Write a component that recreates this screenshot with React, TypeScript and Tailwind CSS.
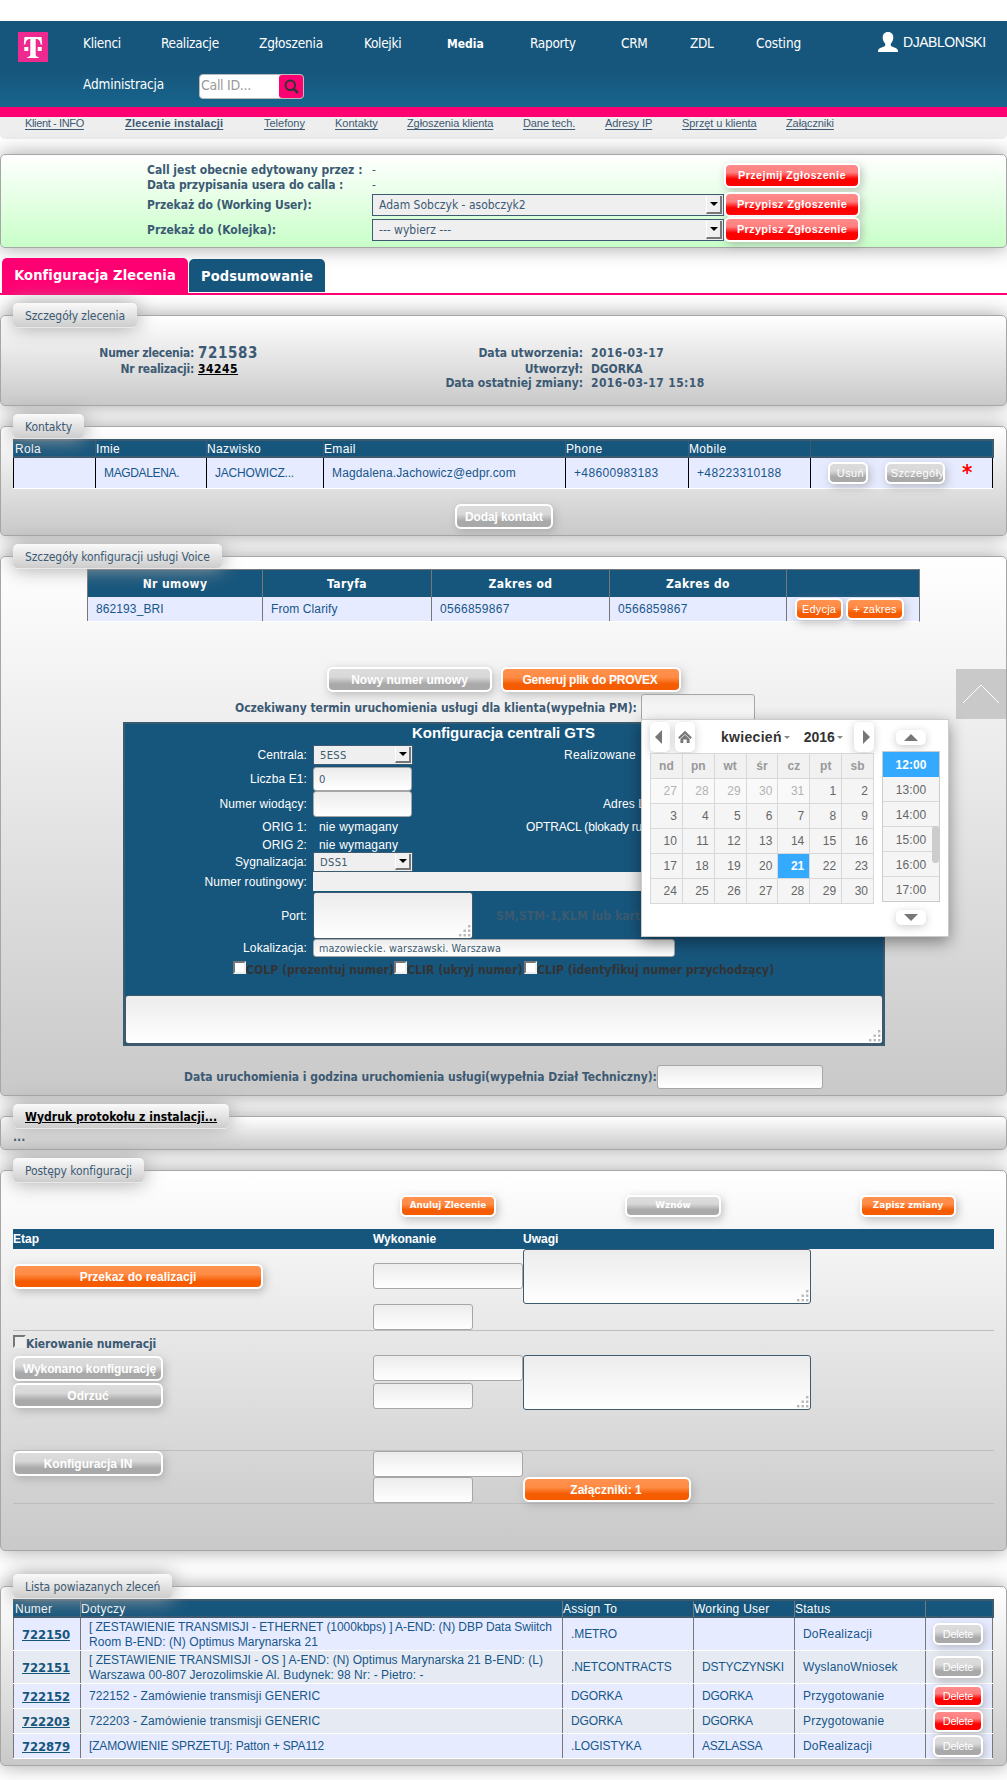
import React from "react";
import clsx from "clsx";

const ARIAL = "font-[family-name:'Liberation_Sans',Arial,sans-serif]";
const TAHOMA = "font-[family-name:'DejaVu_Sans_Condensed','DejaVu_Sans',sans-serif]";
const VERDANA = "font-[family-name:'DejaVu_Sans',sans-serif]";

const shadow = "shadow-[0_0_20px_#a3a3a3]";

type Tone = "red" | "orange" | "gray";

const tones: Record<Tone, string> = {
  red: "bg-[linear-gradient(#ff8b8b_0%,#ff8080_36%,#ff0000_66%,#ff0000_100%)]",
  orange: "bg-[linear-gradient(#ff924f_0%,#ff8b45_40%,#f55b00_72%,#f55b00_100%)]",
  gray: "bg-[linear-gradient(#dcdcdc_0%,#d8d8d8_38%,#a9a9a9_72%,#a9a9a9_100%)]",
};

function Btn({ tone, className, children }: { tone: Tone; className: string; children: React.ReactNode }) {
  return (
    <button
      className={clsx(
        "flex shrink-0 items-center justify-center overflow-hidden rounded-[6px] border-2 border-white text-white shadow-[2px_3px_9px_#9a9a9a99]",
        tones[tone],
        className,
      )}
    >
      {children}
    </button>
  );
}

function Panel({ title, strong, className, children }: { title: string; strong?: boolean; className: string; children?: React.ReactNode }) {
  return (
    <section className={clsx("relative rounded-[5px] border border-[#a6a6a6] bg-linear-to-b from-white to-[#c9c9c9] px-3", shadow, className)}>
      <h2
        className={clsx(
          "absolute -top-[13px] left-3 flex h-[25px] items-center rounded-[5px] border-b border-[#e8e8e8] bg-linear-to-b from-[#fafafa] to-[#cdcdcd] px-3 pt-[2px] text-[12px]",
          shadow,
          strong ? "font-bold tracking-[0.04px] text-black underline" : "font-normal tracking-[-0.08px]",
        )}
      >
        {title}
      </h2>
      {children}
    </section>
  );
}

function Arrow() {
  return (
    <span className="my-px mr-px flex w-4 items-center justify-center self-stretch border-r-2 border-b-2 border-l border-[#777] border-l-white bg-[#f0f0f0]">
      <span className="border-x-4 border-t-4 border-x-transparent border-t-black" />
    </span>
  );
}

function Select({ className, children }: { className: string; children: React.ReactNode }) {
  return (
    <div className={clsx("flex shrink-0 items-center justify-between bg-[#efefef]", className)}>
      <span>{children}</span>
      <Arrow />
    </div>
  );
}

function Field({ className, children }: { className: string; children?: React.ReactNode }) {
  return <div className={clsx("shrink-0 rounded-[3px] border border-[#a6a6a6] bg-linear-to-b from-[#ececec] to-white", className)}>{children}</div>;
}

function Area({ className }: { className: string }) {
  return (
    <div className={clsx("relative shrink-0 rounded-[3px] border border-[#3c5a70] bg-linear-to-b from-[#ececec] to-white", className)}>
      <svg className="absolute right-px bottom-px size-3" viewBox="0 0 12 12" fill="#b8b8b8">
        <rect x="9" y="0" width="2.4" height="2.4" />
        <rect x="4.5" y="4.5" width="2.4" height="2.4" />
        <rect x="9" y="4.5" width="2.4" height="2.4" />
        <rect x="0" y="9" width="2.4" height="2.4" />
        <rect x="4.5" y="9" width="2.4" height="2.4" />
        <rect x="9" y="9" width="2.4" height="2.4" />
      </svg>
    </div>
  );
}

function Check({ className }: { className?: string }) {
  return <span className={clsx("size-[13px] shrink-0 border-2 border-t-[#777] border-r-[#eee] border-b-[#eee] border-l-[#777]", className ?? "bg-white")} />;
}

function Row({ label, className, children }: { label: string; className: string; children?: React.ReactNode }) {
  return (
    <div className={clsx("flex items-center", className)}>
      <span className="mr-[6px] w-[182px] shrink-0 text-right">{label}</span>
      {children}
    </div>
  );
}

function Header() {
  const nav: [string, string][] = [
    ["Klienci", "w-[78px]"],
    ["Realizacje", "w-[98px]"],
    ["Zgłoszenia", "w-[105px] tracking-[-0.15px]"],
    ["Kolejki", "w-[83px]"],
    ["Media", "w-[83px]"],
    ["Raporty", "w-[91px]"],
    ["CRM", "w-[69px]"],
    ["ZDL", "w-[66px]"],
    ["Costing", "w-[122px] tracking-[-0.1px]"],
  ];
  return (
    <header className="mt-[21px] h-24 border-b-10 border-[#ff0073] bg-[linear-gradient(#17567c_0%,#17567c_58%,#17658d_100%)] text-[13.5px] tracking-[-0.3px] text-white">
      <div className="flex">
        <div className="mt-[11px] ml-[18px] flex size-[30px] items-center justify-center bg-[#ee2a90]">
          <svg className="size-[30px]" viewBox="0 0 30 30" fill="white">
            <path d="M6.500 5h17l.7 7.500h-1.500c-.7-4-1.800-5.400-5-5.500v15.300c0 2 .6 2.400 3 2.600V26h-11.400v-1.100c2.400-.2 3-.6 3-2.600V7c-3.200.1-4.300 1.500-5 5.500H5.800z" />
            <path d="M6.300 15h4v4h-4zM19.700 15h4v4h-4z" />
          </svg>
        </div>
        <div className="ml-[35px] flex flex-col">
          <nav className="mt-[11px] flex h-[23px] items-center">
            {nav.map(([t, w]) => (
              <a key={t} className={clsx("shrink-0", w, t === "Media" && "text-[12px] font-bold tracking-normal")}>
                {t}
              </a>
            ))}
            <svg className="-mt-[3px] h-5 w-5 shrink-0" viewBox="0 0 20 20" fill="white">
              <path d="M10 0c3.500 0 5.300 2.300 5.300 5.500 0 2.700-1.200 4.800-2.500 5.900v2.400c0 .9 7.200 2 7.200 5V20H0v-1.200c0-3 7.200-4.100 7.200-5v-2.400C5.900 10.300 4.700 8.200 4.700 5.500 4.700 2.300 6.500 0 10 0z" />
            </svg>
            <span className={clsx("-mt-[2px] ml-[5px] text-[14px] tracking-[-0.45px]", ARIAL)}>DJABLONSKI</span>
          </nav>
          <div className="mt-[18px] flex">
            <span className="mt-px w-[116px] leading-[20px] tracking-[-0.15px]">Administracja</span>
            <div className="mt-px flex h-[25px] w-[105px] rounded-[4px] border border-[#bbb] bg-white">
              <span className="flex-1 pl-px text-[14px] leading-[20px] tracking-[-0.3px] text-[#999]">Call ID...</span>
              <span className="flex w-6 items-center justify-center rounded-[3px] bg-[#ff0073]">
                <svg className="size-[15px]" viewBox="0 0 15 15" fill="none" stroke="#333" strokeWidth="2">
                  <circle cx="6.300" cy="6.300" r="4.800" />
                  <path d="M9.800 9.800l4.200 4.200" strokeWidth="2.600" />
                </svg>
              </span>
            </div>
          </div>
        </div>
      </div>
    </header>
  );
}

function SubMenu() {
  const items: [string, string][] = [
    ["Klient - INFO", "w-[100px] tracking-[-0.36px]"],
    ["Zlecenie instalacji", "w-[139px] font-bold tracking-[0.22px]"],
    ["Telefony", "w-[71px]"],
    ["Kontakty", "w-[72px]"],
    ["Zgłoszenia klienta", "w-[116px] tracking-[-0.1px]"],
    ["Dane tech.", "w-[82px] tracking-[-0.1px]"],
    ["Adresy IP", "w-[77px] tracking-[-0.05px]"],
    ["Sprzęt u klienta", "w-[104px] tracking-[-0.08px]"],
    ["Załączniki", "w-[60px] tracking-[-0.1px]"],
  ];
  return (
    <nav className={clsx("flex h-[22px] rounded-b-[5px] bg-[#eee] pl-[25px] text-[11px] leading-[12px]", ARIAL)}>
      {items.map(([t, c]) => (
        <a key={t} className={clsx("shrink-0 underline underline-offset-[2px]", c)}>
          {t}
        </a>
      ))}
    </nav>
  );
}

function AssignPanel() {
  const b = clsx("-ml-px h-[25px] w-[136px] text-[11px] font-bold tracking-[0.3px]", ARIAL);
  const s = "h-[22px] w-[352px] border border-[#3c5a70] pl-[6px] text-[12px]";
  return (
    <section
      className={clsx(
        "mt-[15px] grid h-[94px] grid-cols-[225px_353px_136px] grid-rows-[15px_15px_25px_25px] content-start items-center rounded-[5px] border border-[#a6a6a6] bg-linear-to-b from-white to-[#c8ffc8] pt-[7px] pl-[146px] text-[12px] font-bold",
        shadow,
      )}
    >
      <span>Call jest obecnie edytowany przez :</span>
      <span className="font-normal">-</span>
      <div className="row-span-2 -mt-[3px]">
        <Btn tone="red" className={b}>Przejmij Zgłoszenie</Btn>
      </div>
      <span className="tracking-[-0.1px]">Data przypisania usera do calla :</span>
      <span className="font-normal">-</span>
      <span className="tracking-[-0.07px]">Przekaż do (Working User):</span>
      <Select className={clsx(s, "font-normal")}>Adam Sobczyk - asobczyk2</Select>
      <Btn tone="red" className={b}>Przypisz Zgłoszenie</Btn>
      <span>Przekaż do (Kolejka):</span>
      <Select className={clsx(s, "font-normal")}>--- wybierz ---</Select>
      <Btn tone="red" className={b}>Przypisz Zgłoszenie</Btn>
    </section>
  );
}

function Tabs() {
  return (
    <div className="mt-[10px] flex h-[37px] items-end border-b-2 border-[#ff0073] pl-[2px] text-[14.5px] font-bold text-white">
      <div className="flex h-[35px] w-[186px] items-center justify-center rounded-t-[5px] bg-[#ff0073] pt-px tracking-[0.1px]">Konfiguracja Zlecenia</div>
      <div className="mb-px ml-px flex h-[33px] w-[136px] items-center justify-center rounded-t-[5px] bg-[#17567c] pt-[3px] tracking-[0.08px]">Podsumowanie</div>
    </div>
  );
}

function OrderPanel() {
  return (
    <Panel title="Szczegóły zlecenia" className="mt-5 flex h-[91px] pt-[29px] text-[12px] leading-[16px] font-bold">
      <div className="grid w-[390px] grid-cols-[181px_1fr] content-start gap-x-1">
        <span className="text-right leading-[17px] tracking-[-0.25px]">Numer zlecenia:</span>
        <span className="text-[15px] leading-[17px] tracking-[0.6px]">721583</span>
        <span className="text-right leading-[15px] tracking-[-0.25px]">Nr realizacji:</span>
        <span className="leading-[15px] tracking-[0.5px] text-black underline">34245</span>
      </div>
      <div className="grid grid-cols-[180px_1fr] content-start gap-x-2">
        <span className="text-right leading-[17px]">Data utworzenia:</span>
        <span className="leading-[17px] tracking-[0.4px]">2016-03-17</span>
        <span className="text-right leading-[15px]">Utworzył:</span>
        <span className="leading-[15px] tracking-[-0.1px]">DGORKA</span>
        <span className="text-right leading-[13px]">Data ostatniej zmiany:</span>
        <span className="leading-[13px] tracking-[0.4px]">2016-03-17 15:18</span>
      </div>
    </Panel>
  );
}

function ContactsPanel() {
  const cols = "grid grid-cols-[82px_111px_117px_242px_123px_122px_183px]";
  const small = "h-[22px] text-[11px] tracking-[0.4px]";
  return (
    <Panel title="Kontakty" className="mt-5 h-[110px] pt-3">
      <div className={clsx("w-[981px] text-[12px]", ARIAL)}>
        <div className={clsx("h-[19px] border-y-2 border-r-2 border-[#3c5a70] bg-[#17567c] tracking-[0.35px] text-white", cols)}>
          {["Rola", "Imie", "Nazwisko", "Email", "Phone", "Mobile", ""].map((t) => (
            <span key={t} className="border-l border-[#3c5a70] leading-[16px] first:pl-px">
              {t}
            </span>
          ))}
        </div>
        <div className={clsx("h-[31px] w-[980px] grid-rows-[30px] border-b border-white bg-[#e6ebff] text-[#17568a]", cols)}>
          {["", "MAGDALENA.", "JACHOWICZ...", "Magdalena.Jachowicz@edpr.com", "+48600983183", "+48223310188"].map((t, i) => (
            <span
              key={i}
              className={clsx(
                "border-l border-black pl-2 leading-[31px]",
                i === 1 && "tracking-[-0.35px]",
                i === 2 && "tracking-[-0.2px]",
                i === 3 && "tracking-[0.15px]",
                i > 3 && "tracking-[0.35px]",
              )}
            >
              {t}
            </span>
          ))}
          <div className="flex items-center border-x border-black pl-[17px]">
            <Btn tone="gray" className={clsx(small, "w-10")}>
              <span className="pl-[5px]">Usuń</span>
            </Btn>
            <Btn tone="gray" className={clsx(small, "ml-[17px] w-[60px]")}>
              <span className="pl-[5px]">Szczegóły</span>
            </Btn>
            <span className={clsx("ml-[17px] text-[22px] leading-[22px] font-bold text-[#ff0000]", TAHOMA)}>*</span>
          </div>
        </div>
      </div>
      <div className="mt-[15px] ml-[442px]">
        <Btn tone="gray" className={clsx("h-[25px] w-[98px] text-[12px] font-bold tracking-[-0.1px]", ARIAL)}>Dodaj kontakt</Btn>
      </div>
    </Panel>
  );
}

function DatePicker() {
  const days = [27, 28, 29, 30, 31, ...Array.from({ length: 30 }, (_, i) => i + 1)];
  const nav = "flex h-[30px] w-5 items-center justify-center rounded-[5px] bg-white shadow-[0_2px_8px_#ccc]";
  return (
    <div className={clsx("absolute top-[162px] left-[640px] z-10 flex h-[218px] w-[308px] border border-[#ccc] bg-white pl-2 text-[12px] text-[#666] shadow-[0_5px_15px_#0000006b]", ARIAL)}>
      <div className="w-[224px]">
        <div className="mt-[2px] flex h-[31px] items-start text-[14px] font-bold tracking-[0.3px] text-[#333]">
          <span className={nav}>
            <span className="mr-1 border-y-[7px] border-r-[7px] border-y-transparent border-r-[#777]" />
          </span>
          <span className={clsx(nav, "ml-[5px]")}>
            <svg className="size-[14px]" viewBox="0 0 14 14" fill="#777">
              <path d="M7 .8L.1 7.500l1.500 1.500L7 3.900 12.400 9l1.500-1.500z" />
              <path d="M2.400 9L7 4.700 11.600 9v4H8.700V9.600H5.300V13H2.400z" />
            </svg>
          </span>
          <span className="ml-[26px] leading-[30px]">kwiecień</span>
          <span className="mt-[14px] ml-[2px] border-x-3 border-t-3 border-x-transparent border-t-[#888]" />
          <span className="ml-[14px] leading-[30px] tracking-normal">2016</span>
          <span className="mt-[14px] ml-[2px] border-x-3 border-t-3 border-x-transparent border-t-[#888]" />
          <span className={clsx(nav, "ml-auto")}>
            <span className="ml-1 border-y-[7px] border-l-[7px] border-y-transparent border-l-[#777]" />
          </span>
        </div>
        <div className="grid auto-rows-[25px] grid-cols-7 border-t border-l border-[#d8d8d8] leading-[25px]">
          {["nd", "pn", "wt", "śr", "cz", "pt", "sb"].map((d) => (
            <span key={d} className="border-r border-b border-[#d8d8d8] bg-[#f1f1f1] text-center font-bold text-[#999]">
              {d}
            </span>
          ))}
          {days.map((d, i) => (
            <span
              key={i}
              className={clsx(
                "border-r border-b border-[#d8d8d8] pr-[5px] text-right",
                i < 5 ? "bg-[#f9f9f9] text-[#b3b3b3]" : i === 25 ? "bg-[#33aaff] font-bold text-white" : "bg-[#f5f5f5]",
              )}
            >
              {d}
            </span>
          ))}
        </div>
      </div>
      <div className="ml-2 flex w-[58px] flex-col items-center">
        <span className="mt-[10px] flex h-[15px] w-[30px] items-center justify-center rounded-[5px] bg-white shadow-[0_2px_8px_#ccc]">
          <span className="border-x-7 border-b-7 border-x-transparent border-b-[#777]" />
        </span>
        <div className="relative mt-[6px] w-full border border-[#ccc] text-center leading-[26px] tracking-[0.1px]">
          {["12:00", "13:00", "14:00", "15:00", "16:00", "17:00"].map((t, i) => (
            <div key={t} className={clsx("h-[25px] border-b", i === 0 ? "border-[#33aaff] bg-[#33aaff] font-bold text-white" : "border-[#d8d8d8] bg-[#f5f5f5]", i === 5 && "!h-6 border-b-0")}>
              {t}
            </div>
          ))}
          <span className="absolute top-[74px] right-0 h-[37px] w-[7px] rounded-[4px] bg-[#ccc]" />
        </div>
        <span className="mt-2 flex h-[15px] w-[30px] items-center justify-center rounded-[5px] bg-white shadow-[0_2px_8px_#ccc]">
          <span className="border-x-7 border-t-7 border-x-transparent border-t-[#777]" />
        </span>
      </div>
    </div>
  );
}

function ExchangeConfig() {
  const sel = clsx("h-5 w-[100px] border border-[#3c5a70] pl-[6px] text-[10px] tracking-[0.3px] text-[#3c5a70]", VERDANA);
  return (
    <div className="ml-[110px] h-[324px] w-[762px] border-2 border-[#3c5a70] bg-[#17567c]">
      <div className={clsx("text-[12px] tracking-[0.1px] text-white", ARIAL)}>
        <div className="h-5 pr-px text-center text-[15px] leading-[17px] font-bold tracking-[-0.05px]">Konfiguracja centrali GTS</div>
        <Row label="Centrala:" className="h-[22px]">
          <Select className={sel}>5ESS</Select>
          <span className="ml-[151px] tracking-[0.3px]">Realizowane</span>
        </Row>
        <Row label="Liczba E1:" className="h-[25px]">
          <Field className={clsx("h-6 w-[99px] pl-[5px] text-[10px] leading-[23px] text-[#3c5a70]", VERDANA)}>0</Field>
        </Row>
        <Row label="Numer wiodący:" className="h-[26px]">
          <Field className="h-[26px] w-[99px]" />
          <span className="ml-[191px]">Adres L</span>
        </Row>
        <Row label="ORIG 1:" className="h-[19px]">
          <span className="w-[100px] shrink-0 pl-[6px] tracking-[0.2px]">nie wymagany</span>
          <span className="ml-[113px] tracking-[-0.15px] whitespace-nowrap">OPTRACL (blokady ru</span>
        </Row>
        <Row label="ORIG 2:" className="h-[17px]">
          <span className="pl-[6px] tracking-[0.2px]">nie wymagany</span>
        </Row>
        <Row label="Sygnalizacja:" className="h-[18px]">
          <Select className={sel}>DSS1</Select>
        </Row>
        <Row label="Numer routingowy:" className="h-[21px]">
          <div className="h-[19px] w-[400px] bg-[#f0f0f0]" />
        </Row>
        <Row label="Port:" className="h-[47px]">
          <Area className="h-[47px] w-[160px]" />
          <span className={clsx("ml-[23px] font-bold whitespace-nowrap text-[#3c5a70]", TAHOMA)}>SM,STM-1,KLM lub karta</span>
        </Row>
        <Row label="Lokalizacja:" className="h-[18px]">
          <Field className="h-[18px] w-[362px] pt-[3px] pl-[5px]">
            <div className={clsx("h-[9px] overflow-hidden text-[9.7px] leading-[12px] text-[#3c5a70]", VERDANA)}>mazowieckie, warszawski, Warszawa</div>
          </Field>
        </Row>
      </div>
      <div className="mt-1 flex h-[34px] items-start pl-[108px] text-[12px] leading-[18px] font-bold text-[#333]">
        <Check />
        <span className="w-[148px] tracking-[0.05px]">COLP (prezentuj numer)</span>
        <Check />
        <span className="w-[117px] tracking-[0.05px]">CLIR (ukryj numer)</span>
        <Check />
        <span className="tracking-[0.05px]">CLIP (identyfikuj numer przychodzący)</span>
      </div>
      <Area className="h-[49px] w-[758px]" />
    </div>
  );
}

function VoicePanel() {
  const cols = "grid grid-cols-[175px_169px_178px_177px_134px]";
  const small = clsx("h-[22px] text-[11px] tracking-[0.2px]", ARIAL);
  return (
    <Panel title="Szczegóły konfiguracji usługi Voice" className="mt-5 h-[540px] pt-3">
      <div className="ml-[74px] w-[833px] text-[12px]">
        <div className={clsx("h-7 border-t border-r border-[#777] bg-[#17567c] text-center text-[12px] leading-[28px] font-bold tracking-[0.4px] text-white", cols)}>
          {["Nr umowy", "Taryfa", "Zakres od", "Zakres do", ""].map((t) => (
            <span key={t} className="border-l border-[#777]">{t}</span>
          ))}
        </div>
        <div className={clsx("h-[25px] grid-rows-[24px] border-r border-b border-[#777] border-b-white bg-[#e6ebff] leading-[25px] tracking-[0.1px] text-[#17568a]", cols, ARIAL)}>
          {["862193_BRI", "From Clarify", "0566859867", "0566859867"].map((t, i) => (
            <span key={i} className={clsx("border-l border-[#777] pl-2", i > 1 && "tracking-[0.3px]")}>{t}</span>
          ))}
          <span className="flex items-center gap-[3px] border-l border-[#777] pl-2">
            <Btn tone="orange" className={clsx(small, "w-12")}>Edycja</Btn>
            <Btn tone="orange" className={clsx(small, "w-[58px]")}>+ zakres</Btn>
          </span>
        </div>
      </div>
      <div className={clsx("mt-[45px] ml-[314px] flex gap-[9px] text-[12px] font-bold", ARIAL)}>
        <Btn tone="gray" className="h-[25px] w-[165px]">Nowy numer umowy</Btn>
        <Btn tone="orange" className="h-[25px] w-[180px] pr-[2px] tracking-[-0.25px]">Generuj plik do PROVEX</Btn>
      </div>
      <div className="mt-[2px] ml-[222px] flex h-7 items-start text-[12px] leading-[28px] font-bold">
        <span className="w-[406px] shrink-0 tracking-[-0.03px]">Oczekiwany termin uruchomienia usługi dla klienta(wypełnia PM):</span>
        <Field className="h-[27px] w-[114px]" />
      </div>
      <ExchangeConfig />
      <div className="mt-[19px] ml-[171px] flex items-center text-[12px] font-bold">
        <span className="w-[473px] shrink-0 tracking-[-0.03px] whitespace-nowrap">Data uruchomienia i godzina uruchomienia usługi(wypełnia Dział Techniczny):</span>
        <Field className="h-6 w-[166px]" />
      </div>
      <DatePicker />
      <div className="absolute top-[112px] left-[955px] flex size-[50px] items-center justify-center bg-[#c9c9c9]">
        <svg className="h-5 w-9" viewBox="0 0 36 20" fill="none" stroke="white" strokeWidth="1">
          <path d="M0 19L18 1l18 18" />
        </svg>
      </div>
    </Panel>
  );
}

function ProgressPanel() {
  const big = clsx("h-[25px] text-[12px] font-bold", ARIAL);
  const top = clsx("h-[22px] w-24 text-[8.800px] font-bold", VERDANA);
  const cols = "grid grid-cols-[360px_150px_1fr]";
  return (
    <Panel title="Postępy konfiguracji" className="mt-5 h-[381px] pt-6">
      <div className="flex pl-[387px]">
        <Btn tone="orange" className={top}>Anuluj Zlecenie</Btn>
        <Btn tone="gray" className={clsx(top, "ml-[129px]")}>Wznów</Btn>
        <Btn tone="orange" className={clsx(top, "ml-[139px]")}>Zapisz zmiany</Btn>
      </div>
      <div className={clsx("mt-3 h-5 w-[981px] bg-[#17567c] text-[12px] leading-[20px] font-bold text-white", ARIAL, cols)}>
        <span>Etap</span>
        <span>Wykonanie</span>
        <span>Uwagi</span>
      </div>
      <div className={clsx("h-[82px] w-[981px] border-b border-[#bdbdbd]", cols)}>
        <div className="pt-[15px]">
          <Btn tone="orange" className={clsx(big, "w-[250px]")}>Przekaz do realizacji</Btn>
        </div>
        <div className="flex flex-col pt-[14px]">
          <Field className="h-[26px] w-[150px]" />
          <Field className="mt-[15px] h-[26px] w-[100px]" />
        </div>
        <Area className="h-[55px] w-[288px]" />
      </div>
      <div className={clsx("h-[120px] w-[981px] border-b border-[#bdbdbd]", cols)}>
        <div className="pt-1">
          <div className="flex h-[21px] items-start text-[12px] leading-[18px] font-bold tracking-[-0.1px]">
            <Check className="bg-[#eee]" />
            Kierowanie numeracji
          </div>
          <Btn tone="gray" className={clsx(big, "w-[150px] pl-[3px] tracking-[-0.1px]")}>Wykonano konfigurację</Btn>
          <Btn tone="gray" className={clsx(big, "mt-[2px] w-[150px]")}>Odrzuć</Btn>
        </div>
        <div className="flex flex-col gap-[2px] pt-6">
          <Field className="h-[26px] w-[150px]" />
          <Field className="h-[26px] w-[100px]" />
        </div>
        <div className="pt-6">
          <Area className="h-[55px] w-[288px]" />
        </div>
      </div>
      <div className={clsx("h-[53px] w-[981px] border-b border-[#bdbdbd]", cols)}>
        <Btn tone="gray" className={clsx(big, "w-[150px]")}>Konfiguracja IN</Btn>
        <div className="flex flex-col">
          <Field className="h-[26px] w-[150px]" />
          <Field className="h-[26px] w-[100px]" />
        </div>
        <div className="pt-[26px]">
          <Btn tone="orange" className={clsx(big, "w-[168px] pr-[2px]")}>Załączniki: 1</Btn>
        </div>
      </div>
    </Panel>
  );
}

function RelatedPanel() {
  const cols = "grid grid-cols-[67px_482px_131px_101px_131px_68px]";
  const rows: [string, string, string, string, string, Tone][] = [
    ["722150", "[ ZESTAWIENIE TRANSMISJI - ETHERNET (1000kbps) ] A-END: (N) DBP Data Swiitch|Room B-END: (N) Optimus Marynarska 21", ".METRO", "", "DoRealizacji", "gray"],
    ["722151", "[ ZESTAWIENIE TRANSMISJI - OS ] A-END: (N) Optimus Marynarska 21 B-END: (L)|Warszawa 00-807 Jerozolimskie Al. Budynek: 98 Nr: - Pietro: -", ".NETCONTRACTS", "DSTYCZYNSKI", "WyslanoWniosek", "gray"],
    ["722152", "722152 - Zamówienie transmisji GENERIC", "DGORKA", "DGORKA", "Przygotowanie", "red"],
    ["722203", "722203 - Zamówienie transmisji GENERIC", "DGORKA", "DGORKA", "Przygotowanie", "red"],
    ["722879", "[ZAMOWIENIE SPRZETU]: Patton + SPA112", ".LOGISTYKA", "ASZLASSA", "DoRealizacji", "gray"],
  ];
  return (
    <Panel title="Lista powiazanych zleceń" className="mt-[35px] h-[180px] pt-3">
      <div className={clsx("w-[981px] text-[12px]", ARIAL)}>
        <div className={clsx("h-[19px] border-y-2 border-r-2 border-[#3c5a70] bg-[#17567c] tracking-[0.25px] text-white", cols)}>
          {["Numer", "Dotyczy", "Assign To", "Working User", "Status", ""].map((t) => (
            <span key={t} className="border-l border-[#777] leading-[16px] first:border-[#3c5a70] first:pl-px">{t}</span>
          ))}
        </div>
        {rows.map(([n, d, a, w, s, tone], i) => {
          const lines = d.split("|");
          return (
            <div
              key={n}
              className={clsx("w-[980px] border-b border-white text-[#17568a]", cols, i % 2 ? "bg-[#e6ebf3]" : "bg-[#e6ebff]", lines.length > 1 ? "h-[33px]" : "h-[25px]")}
            >
              <span className={clsx("flex items-center border-l border-[#777] pt-[2px] pl-2 text-[13px] font-bold tracking-[-0.15px] text-[#17567c] underline", TAHOMA)}>{n}</span>
              <span className="flex flex-col justify-center border-l border-[#777] pt-px pl-2 leading-[15px] whitespace-nowrap">
                <span className={clsx(i === 0 && "tracking-[-0.06px]", i === 1 && "tracking-[0.03px]", i > 1 && i < 4 && "tracking-[0.1px]", i === 4 && "tracking-[-0.15px]")}>{lines[0]}</span>
                {lines[1] && <span className="tracking-[0.06px]">{lines[1]}</span>}
              </span>
              <span className="flex items-center border-l border-[#777] pl-2 tracking-[-0.1px]">{a}</span>
              <span className="flex items-center border-l border-[#777] pl-2 tracking-[-0.2px]">{w}</span>
              <span className="flex items-center border-l border-[#777] pl-2 tracking-[0.2px]">{s}</span>
              <span className="flex items-center border-x border-[#777] pl-2">
                <Btn tone={tone} className="-ml-px h-[22px] w-[50px] text-[11px] tracking-[-0.2px]">Delete</Btn>
              </span>
            </div>
          );
        })}
      </div>
    </Panel>
  );
}

export default function App() {
  return (
    <div className={clsx("flex h-[1780px] w-[1007px] flex-col overflow-hidden bg-white text-[#3c5a73]", TAHOMA)}>
      <Header />
      <SubMenu />
      <AssignPanel />
      <Tabs />
      <OrderPanel />
      <ContactsPanel />
      <VoicePanel />
      <Panel title="Wydruk protokołu z instalacji..." strong className="mt-5 h-[34px] pt-[13px] text-[12px] leading-[15px] font-bold">
        ...
      </Panel>
      <ProgressPanel />
      <RelatedPanel />
    </div>
  );
}
